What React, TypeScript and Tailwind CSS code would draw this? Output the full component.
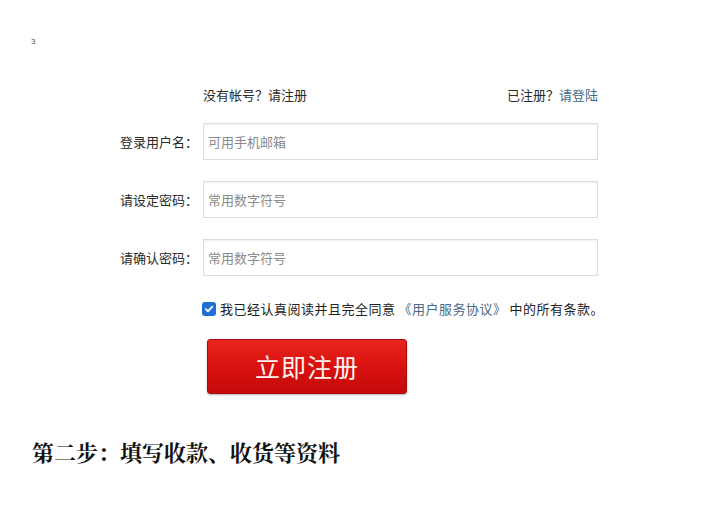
import React from 'react';

const cjk = "font-['Noto_Sans_CJK_SC','Noto_Sans',sans-serif]";

interface FieldRowProps {
  label: string;
  placeholder: string;
}

const FieldRow: React.FC<FieldRowProps> = ({ label, placeholder }) => (
  <div className="flex items-center">
    <div className="w-[83px] text-[13px] text-[#2a2a2a]">{label}</div>
    <div className="w-[395px] h-[37px] border border-[#dcdcdc] bg-white flex items-center pl-[4px] shadow-[inset_0_1px_2px_rgba(0,0,0,0.06)]">
      <span className="text-[13px] text-[#8a8a8a]">{placeholder}</span>
    </div>
  </div>
);

export default function App() {
  return (
    <div className={`w-[720px] h-[509px] bg-white overflow-hidden ${cjk}`}>
      {/* page number */}
      <div className="pt-[36px] pl-[31px] text-[8px] leading-[12px] text-[#555] font-['Liberation_Sans',sans-serif]">3</div>

      <div className="ml-[120px] w-[478px] mt-[38px]">
        {/* header links */}
        <div className="flex justify-between pl-[83px] text-[13px] leading-[18px] text-[#2a2a2a]">
          <span>没有帐号？请注册</span>
          <span>
            已注册？<span className="text-[#3f6a8a]">请登陆</span>
          </span>
        </div>

        <div className="mt-[19px] flex flex-col gap-[21px]">
          <FieldRow label="登录用户名：" placeholder="可用手机邮箱" />
          <FieldRow label="请设定密码：" placeholder="常用数字符号" />
          <FieldRow label="请确认密码：" placeholder="常用数字符号" />
        </div>

        {/* agreement */}
        <div className="mt-[24px] ml-[82px] flex items-center whitespace-nowrap text-[13px] leading-[18px] tracking-[0.5px] text-[#222]">
          <span className="shrink-0 w-[14px] h-[14px] rounded-[3px] bg-[#1f6fd6] flex items-center justify-center mr-[4px]">
            <svg width="10" height="10" viewBox="0 0 10 10">
              <path d="M1.8 5.2 L4 7.4 L8.3 2.6" fill="none" stroke="#fff" strokeWidth="1.8" strokeLinecap="round" strokeLinejoin="round" />
            </svg>
          </span>
          <span className="shrink-0">我已经认真阅读并且完全同意</span>
          <span className="shrink-0 text-[#4a6887] ml-[3px]">《用户服务协议》</span>
          <span className="shrink-0 ml-[3px]">中的所有条款。</span>
        </div>

        {/* submit */}
        <div className="mt-[21px] ml-[87px] w-[200px] h-[55px] rounded-[3px] border border-[#a80c0c] bg-gradient-to-b from-[#e8241f] via-[#d8110f] to-[#c40a0a] shadow-[0_1px_2px_rgba(0,0,0,0.3)] flex items-center justify-center">
          <span className="text-[25px] text-[#fff2ee] tracking-[1px]">立即注册</span>
        </div>
      </div>

      {/* step heading */}
      <div className="mt-[44px] pl-[32px] text-[22px] leading-[28px] font-bold text-[#111] font-['Noto_Serif_CJK_SC','Noto_Sans_CJK_SC',serif]">
        第二步：填写收款、收货等资料
      </div>
    </div>
  );
}
